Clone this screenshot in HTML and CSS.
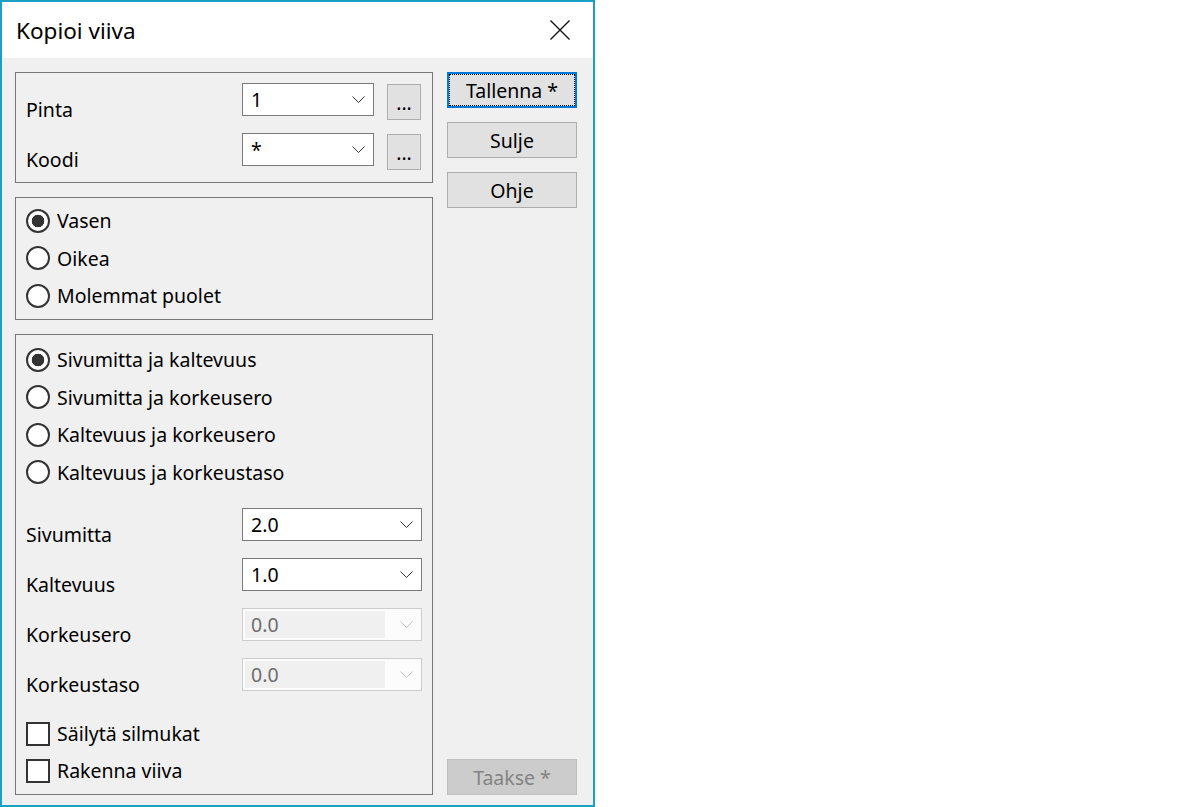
FILE: index.html
```html
<!DOCTYPE html>
<html>
    <head>
        <meta charset="utf-8">
        <title>Kopioi viiva</title>
        <link rel="stylesheet" href="styles.css">
    </head>
    <body>
        <div class="dialog">
            <div class="titlebar">
                <span class="title">Kopioi viiva</span>
                <svg class="close" width="20" height="20" viewBox="0 0 20 20">
                    <path d="M0.5 0.5L19.5 19.5M19.5 0.5L0.5 19.5" stroke="#111" stroke-width="1.4" fill="none"/>
                </svg>
            </div>
            <div class="content">
                <div class="left">
                    <div class="group group-surface">
                        <div class="field">
                            <label class="field-label">Pinta</label>
                            <div class="combo combo-short">
                                <span class="combo-value">1</span>
                                <svg class="chevron" width="13" height="7" viewBox="0 0 13 7"><polyline points="0.5,0.5 6.5,6.5 12.5,0.5" fill="none" stroke="#333" stroke-width="1"/></svg>
                            </div>
                            <button class="browse">...</button>
                        </div>
                        <div class="field">
                            <label class="field-label">Koodi</label>
                            <div class="combo combo-short">
                                <span class="combo-value">*</span>
                                <svg class="chevron" width="13" height="7" viewBox="0 0 13 7"><polyline points="0.5,0.5 6.5,6.5 12.5,0.5" fill="none" stroke="#333" stroke-width="1"/></svg>
                            </div>
                            <button class="browse">...</button>
                        </div>
                    </div>

                    <div class="group group-side">
                        <label class="option"><input type="radio" name="side" checked><span>Vasen</span></label>
                        <label class="option"><input type="radio" name="side"><span>Oikea</span></label>
                        <label class="option"><input type="radio" name="side"><span>Molemmat puolet</span></label>
                    </div>

                    <div class="group group-method">
                        <div class="radios">
                            <label class="option"><input type="radio" name="method" checked><span>Sivumitta ja kaltevuus</span></label>
                            <label class="option"><input type="radio" name="method"><span>Sivumitta ja korkeusero</span></label>
                            <label class="option"><input type="radio" name="method"><span>Kaltevuus ja korkeusero</span></label>
                            <label class="option"><input type="radio" name="method"><span>Kaltevuus ja korkeustaso</span></label>
                        </div>
                        <div class="fields">
                            <div class="field">
                                <label class="field-label">Sivumitta</label>
                                <div class="combo combo-long">
                                    <span class="combo-value">2.0</span>
                                    <svg class="chevron" width="13" height="7" viewBox="0 0 13 7"><polyline points="0.5,0.5 6.5,6.5 12.5,0.5" fill="none" stroke="#333" stroke-width="1"/></svg>
                                </div>
                            </div>
                            <div class="field">
                                <label class="field-label">Kaltevuus</label>
                                <div class="combo combo-long">
                                    <span class="combo-value">1.0</span>
                                    <svg class="chevron" width="13" height="7" viewBox="0 0 13 7"><polyline points="0.5,0.5 6.5,6.5 12.5,0.5" fill="none" stroke="#333" stroke-width="1"/></svg>
                                </div>
                            </div>
                            <div class="field">
                                <label class="field-label">Korkeusero</label>
                                <div class="combo combo-long combo-disabled">
                                    <span class="combo-value">0.0</span>
                                    <svg class="chevron" width="13" height="7" viewBox="0 0 13 7"><polyline points="0.5,0.5 6.5,6.5 12.5,0.5" fill="none" stroke="#c2c2c2" stroke-width="1"/></svg>
                                </div>
                            </div>
                            <div class="field">
                                <label class="field-label">Korkeustaso</label>
                                <div class="combo combo-long combo-disabled">
                                    <span class="combo-value">0.0</span>
                                    <svg class="chevron" width="13" height="7" viewBox="0 0 13 7"><polyline points="0.5,0.5 6.5,6.5 12.5,0.5" fill="none" stroke="#c2c2c2" stroke-width="1"/></svg>
                                </div>
                            </div>
                        </div>
                        <div class="checks">
                            <label class="option check"><input type="checkbox"><span>Säilytä silmukat</span></label>
                            <label class="option check"><input type="checkbox"><span>Rakenna viiva</span></label>
                        </div>
                    </div>
                </div>

                <div class="buttons">
                    <button class="btn btn-default">Tallenna *</button>
                    <button class="btn">Sulje</button>
                    <button class="btn">Ohje</button>
                    <button class="btn btn-disabled" disabled>Taakse *</button>
                </div>
            </div>
        </div>
    </body>
</html>
```

FILE: styles.css
```css
* {
    box-sizing: border-box;
}

body {
    margin: 0;
    background: #fff;
    font-family: "Noto Sans", "Liberation Sans", sans-serif;
    font-size: 19.5px;
    color: #000;
}

.dialog {
    width: 595px;
    height: 807px;
    border: 2px solid #1a9fc5;
    background: #f0f0f0;
    display: flex;
    flex-direction: column;
}

.titlebar {
    height: 56px;
    flex: none;
    background: #fff;
    display: flex;
    align-items: center;
    justify-content: space-between;
    padding: 0 23px 0 14px;
}

.title {
    font-size: 22.5px;
}

.content {
    flex: 1;
    display: flex;
    gap: 14px;
    padding: 14px 16px 10px 13px;
}

.left {
    width: 418px;
    display: flex;
    flex-direction: column;
    gap: 14px;
}

.group {
    border: 1px solid #777;
}

/* pinta / koodi */
.group-surface {
    display: flex;
    flex-direction: column;
    gap: 13px;
    padding: 10px 11px 12px 10px;
}

.field {
    display: flex;
    align-items: flex-start;
    height: 37px;
}

.field-label {
    flex: 1;
    padding-top: 14.5px;
    line-height: 24px;
}

.combo {
    height: 33px;
    flex: none;
    display: flex;
    align-items: center;
    padding: 0 8px;
    border: 1px solid #7a7a7a;
    background: #fff;
}

.combo-short {
    width: 132px;
}

.combo-long {
    width: 180px;
}

.combo-value {
    flex: 1;
}

.chevron {
    flex: none;
}

.combo-disabled {
    border-color: #cccccc;
    background: #fcfcfc;
    padding: 2px 8px 2px 2px;
    align-items: stretch;
    color: #6d6d6d;
}

.combo-disabled .combo-value {
    flex: none;
    width: 140px;
    display: flex;
    align-items: center;
    padding-left: 6px;
    background: #f0f0f0;
}

.combo-disabled .chevron {
    margin-left: auto;
    align-self: center;
}

.browse {
    width: 34px;
    height: 36px;
    margin: 1px 0 0 13px;
    padding: 0;
    border: 1px solid #adadad;
    background: #e1e1e1;
    font: inherit;
    color: #000;
}

/* radios and checkboxes */
.group-side {
    padding: 4px 10px 4.5px 10px;
}

.option {
    display: flex;
    align-items: center;
    height: 37.5px;
}

.option input {
    appearance: none;
    -webkit-appearance: none;
    width: 24px;
    height: 24px;
    margin: 0 7px 0 0;
    flex: none;
    border: 2px solid #333;
    border-radius: 50%;
    background: #fff;
}

.option input[type="radio"]:checked {
    background: radial-gradient(circle, #333 0 6px, #fff 6.6px);
}

.option input[type="checkbox"] {
    border-radius: 0;
}

.group-method {
    padding: 6px 10px 5px 10px;
}

.fields {
    margin-top: 17px;
    display: flex;
    flex-direction: column;
    gap: 17px;
}

.fields .field {
    height: 33px;
}

.checks {
    margin-top: 24px;
}

.check {
    height: 37px;
}

/* right column */
.buttons {
    width: 130px;
    display: flex;
    flex-direction: column;
    gap: 14px;
}

.btn {
    height: 36px;
    padding: 0;
    border: 1px solid #adadad;
    background: #e1e1e1;
    font: inherit;
    color: #000;
}

.btn-default {
    border: 2px solid #0078d7;
    outline: 1px dotted #000;
    outline-offset: -3px;
}

.btn-disabled {
    margin-top: auto;
    background: #cccccc;
    border-color: #bfbfbf;
    color: #838383;
}
```
